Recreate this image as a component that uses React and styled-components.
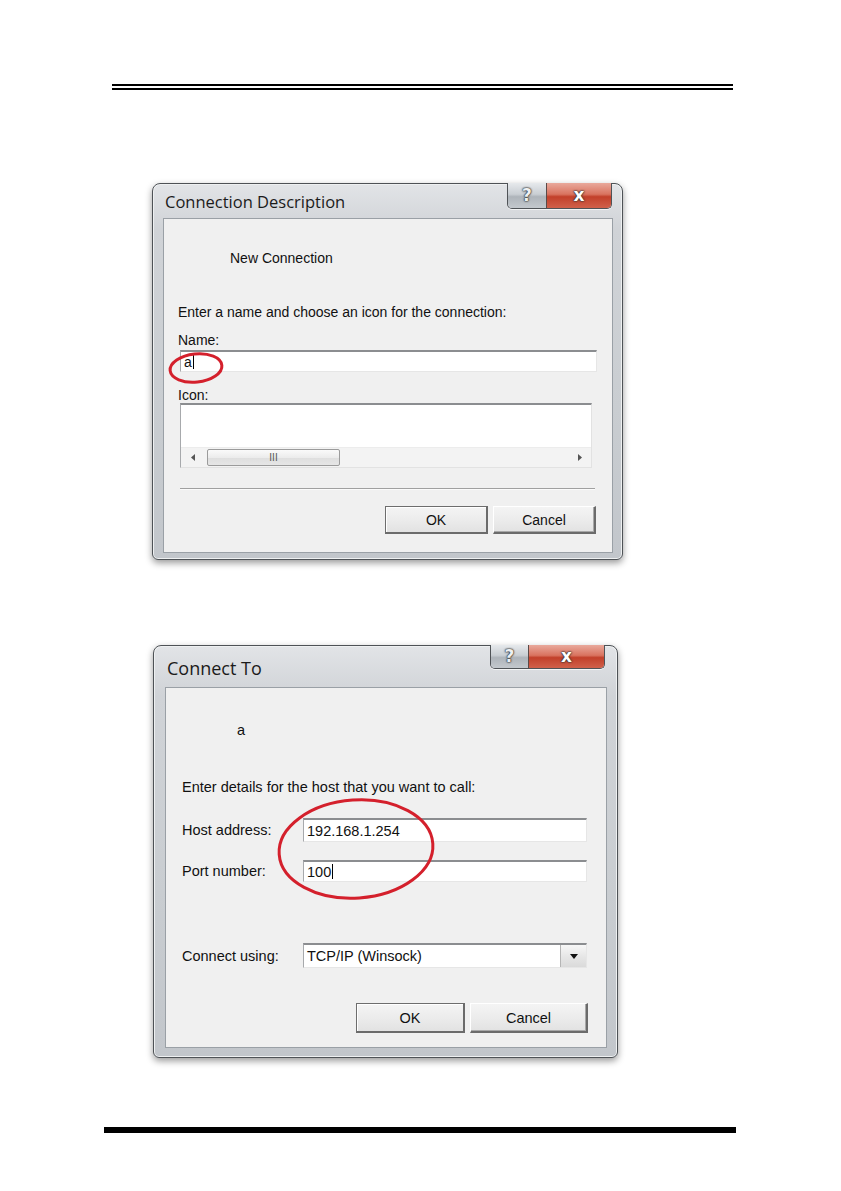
import React from "react";
import styled, { createGlobalStyle } from "styled-components";

const GlobalStyle = createGlobalStyle`
  html, body {
    margin: 0;
    padding: 0;
    background: #ffffff;
  }
  body {
    font-family: "Liberation Sans", Arial, sans-serif;
    color: #000;
  }
`;

const Page = styled.div`
  width: 841px;
  min-height: 1191px;
  padding-top: 84px;
  box-sizing: border-box;
  display: flex;
  flex-direction: column;
`;

const HeaderRule = styled.div`
  margin-left: 112px;
  width: 621px;
  height: 2px;
  border-top: 2px solid #000;
  border-bottom: 2px solid #000;
`;

const FooterRule = styled.div`
  margin-top: 69px;
  margin-left: 104px;
  width: 632px;
  height: 6px;
  background: #000;
`;

const Window = styled.div`
  position: relative;
  box-sizing: border-box;
  margin-top: ${(p) => p.$top}px;
  margin-left: ${(p) => p.$left}px;
  width: ${(p) => p.$width}px;
  height: ${(p) => p.$height}px;
  padding: 0 ${(p) => p.$padR}px ${(p) => p.$padB}px ${(p) => p.$padL}px;
  border: 1px solid #4e5256;
  border-radius: 8px 8px 6px 6px;
  background: linear-gradient(180deg, #e2e4e7 0%, #d0d3d7 12%, #c9cdd1 60%, #c2c6cb 100%);
  box-shadow: inset 0 0 0 1px #eef0f1, 0 3px 7px rgba(0, 0, 0, 0.4);
  display: flex;
  flex-direction: column;
`;

const TitleBar = styled.div`
  height: ${(p) => p.$height}px;
  display: flex;
  justify-content: space-between;
  align-items: flex-start;
  flex-shrink: 0;
`;

const Title = styled.div`
  padding-top: ${(p) => p.$pt}px;
  padding-left: 2px;
  font-family: "Open Sans", "Noto Sans", sans-serif;
  font-size: ${(p) => p.$size}px;
  line-height: 20px;
  color: #1b1b1b;
  white-space: nowrap;
`;

const Caption = styled.div`
  display: flex;
  margin-top: -1px;
  margin-right: ${(p) => p.$right}px;
  height: ${(p) => p.$height}px;
  border: 1px solid #4f5357;
  border-top: none;
  border-radius: 0 0 5px 5px;
  overflow: hidden;
  box-shadow: 0 1px 0 rgba(255, 255, 255, 0.7);
`;

const CapButton = styled.div`
  width: ${(p) => p.$w}px;
  display: flex;
  align-items: center;
  justify-content: center;
  font-family: "DejaVu Sans", sans-serif;
  font-weight: bold;
  font-size: ${(p) => (p.$close ? 17 : 17)}px;
  line-height: 1;
  color: ${(p) => (p.$close ? "#ffffff" : "#eef0f2")};
  text-shadow: 0 0 1px #2e2e2e, 0 0 2px #2e2e2e, 0 0 2px #444;
  background: ${(p) =>
    p.$close
      ? "linear-gradient(180deg, #e9a99c 0%, #d9735f 45%, #c2402a 55%, #d0604a 100%)"
      : "linear-gradient(180deg, #e6e9ec 0%, #c9ced3 45%, #aeb4ba 55%, #c3c8cd 100%)"};
  border-left: ${(p) => (p.$close ? "1px solid #5a4a48" : "none")};
`;

const Panel = styled.div`
  position: relative;
  box-sizing: border-box;
  height: ${(p) => p.$height}px;
  padding: ${(p) => p.$pad};
  background: #f0f0f0;
  border: 1px solid #9aa0a6;
  display: flex;
  flex-direction: column;
  font-size: ${(p) => p.$font}px;
  color: #111;
`;

const Text = styled.div`
  height: 16px;
  line-height: 16px;
  margin-top: ${(p) => p.$mt || 0}px;
  margin-left: ${(p) => p.$ml || 0}px;
  white-space: nowrap;
`;

const Field = styled.div`
  box-sizing: border-box;
  margin-top: ${(p) => p.$mt || 0}px;
  margin-left: ${(p) => p.$ml || 0}px;
  width: ${(p) => p.$w}px;
  height: ${(p) => p.$h}px;
  background: #fff;
  border-top: 2px solid #8b8d90;
  border-left: 1px solid #a7a9ac;
  border-right: 1px solid #e6e6e6;
  border-bottom: 1px solid #e6e6e6;
  padding-left: 3px;
  display: flex;
  align-items: center;
  white-space: nowrap;
`;

const Caret = styled.span`
  display: inline-block;
  width: 1px;
  height: 15px;
  margin-left: 1px;
  background: #000;
`;

const ListBox = styled.div`
  box-sizing: border-box;
  margin-left: 2px;
  width: 412px;
  height: 65px;
  background: #fff;
  border-top: 2px solid #8b8d90;
  border-left: 1px solid #a7a9ac;
  border-right: 1px solid #e2e2e2;
  border-bottom: 1px solid #e2e2e2;
  display: flex;
  flex-direction: column;
  justify-content: flex-end;
`;

const ScrollBar = styled.div`
  height: 19px;
  background: #f3f3f3;
  border-top: 1px solid #ececec;
  display: flex;
  align-items: center;
`;

const ScrollArrow = styled.div`
  width: 24px;
  display: flex;
  justify-content: center;
  align-items: center;
`;

const Thumb = styled.div`
  box-sizing: border-box;
  width: 133px;
  height: 17px;
  margin-left: 2px;
  border: 1px solid #9b9b9b;
  border-radius: 2px;
  background: linear-gradient(180deg, #fafafa 0%, #ececec 50%, #dedede 51%, #e6e6e6 100%);
  display: flex;
  justify-content: center;
  align-items: center;
  font-size: 10px;
  color: #555;
`;

const Spacer = styled.div`
  flex: 1;
`;

const Separator = styled.div`
  margin-top: 20px;
  margin-left: 2px;
  width: 415px;
  height: 1px;
  background: #a0a0a0;
  border-bottom: 1px solid #fbfbfb;
`;

const ButtonRow = styled.div`
  margin-top: ${(p) => p.$mt}px;
  display: flex;
  justify-content: flex-end;
  gap: 5px;
`;

const Button = styled.div`
  box-sizing: border-box;
  width: ${(p) => p.$w}px;
  height: ${(p) => p.$h}px;
  display: flex;
  align-items: center;
  justify-content: center;
  background: linear-gradient(180deg, #f4f4f4 0%, #ececec 50%, #e2e2e2 100%);
  border-top: 1px solid ${(p) => (p.$default ? "#6d6d6d" : "#ffffff")};
  border-left: 1px solid ${(p) => (p.$default ? "#6d6d6d" : "#ffffff")};
  border-right: 2px solid #6b6b6b;
  border-bottom: 2px solid #6b6b6b;
  box-shadow: ${(p) => (p.$default ? "inset 1px 1px 0 #fff" : "inset -1px -1px 0 #a8a8a8")};
  color: #111;
`;

const FormRow = styled.div`
  margin-top: ${(p) => p.$mt}px;
  display: flex;
  align-items: center;
`;

const RowLabel = styled.div`
  width: 121px;
  flex-shrink: 0;
  white-space: nowrap;
`;

const Combo = styled(Field)`
  padding-right: 0;
  justify-content: space-between;
`;

const DropButton = styled.div`
  box-sizing: border-box;
  width: 26px;
  height: 100%;
  border-left: 1px solid #b5b5b5;
  background: linear-gradient(180deg, #f7f7f7 0%, #e7e7e7 50%, #dadada 100%);
  display: flex;
  align-items: center;
  justify-content: center;
`;

const Ring = styled.svg`
  position: absolute;
  left: ${(p) => p.$x}px;
  top: ${(p) => p.$y}px;
  overflow: visible;
  pointer-events: none;
`;

const Arrow = ({ dir }) => (
  <svg width="5" height="7" viewBox="0 0 5 7">
    {dir === "left" ? <path d="M4 0 L0 3.5 L4 7 Z" fill="#555" /> : <path d="M1 0 L5 3.5 L1 7 Z" fill="#555" />}
  </svg>
);

const ConnectionDescription = () => (
  <Window $top={93} $left={152} $width={471} $height={377} $padL={10} $padR={9} $padB={6}>
    <TitleBar $height={34}>
      <Title $pt={8} $size={16.5}>Connection Description</Title>
      <Caption $right={1} $height={25}>
        <CapButton $w={38}>?</CapButton>
        <CapButton $w={64} $close>x</CapButton>
      </Caption>
    </TitleBar>
    <Panel $height={335} $pad="31px 16px 18px 14px" $font={14}>
      <Text $ml={52}>New Connection</Text>
      <Text $mt={38}>Enter a name and choose an icon for the connection:</Text>
      <Text $mt={12}>Name:</Text>
      <Field $mt={2} $ml={2} $w={417} $h={22}>
        a<Caret />
      </Field>
      <Text $mt={15}>Icon:</Text>
      <ListBox>
        <ScrollBar>
          <ScrollArrow>
            <Arrow dir="left" />
          </ScrollArrow>
          <Thumb>III</Thumb>
          <Spacer />
          <ScrollArrow>
            <Arrow dir="right" />
          </ScrollArrow>
        </ScrollBar>
      </ListBox>
      <Separator />
      <ButtonRow $mt={16}>
        <Button $w={103} $h={28} $default>OK</Button>
        <Button $w={103} $h={28}>Cancel</Button>
      </ButtonRow>
      <Ring $x={3} $y={132} width="58" height="34" viewBox="0 0 58 34">
        <ellipse cx="29" cy="17" rx="26" ry="14" fill="none" stroke="#d4202c" strokeWidth="3" transform="rotate(-6 29 17)" />
      </Ring>
    </Panel>
  </Window>
);

const ConnectTo = () => (
  <Window $top={85} $left={153} $width={465} $height={413} $padL={11} $padR={10} $padB={9}>
    <TitleBar $height={41}>
      <Title $pt={12} $size={18}>Connect To</Title>
      <Caption $right={2} $height={23}>
        <CapButton $w={37}>?</CapButton>
        <CapButton $w={75} $close>x</CapButton>
      </Caption>
    </TitleBar>
    <Panel $height={361} $pad="34px 18px 14px 16px" $font={14.5}>
      <Text $ml={55}>a</Text>
      <Text $mt={41}>Enter details for the host that you want to call:</Text>
      <FormRow $mt={23}>
        <RowLabel>Host address:</RowLabel>
        <Field $w={284} $h={24}>192.168.1.254</Field>
      </FormRow>
      <FormRow $mt={18}>
        <RowLabel>Port number:</RowLabel>
        <Field $w={284} $h={22}>
          100<Caret />
        </Field>
      </FormRow>
      <FormRow $mt={61}>
        <RowLabel>Connect using:</RowLabel>
        <Combo $w={284} $h={25}>
          TCP/IP (Winsock)
          <DropButton>
            <svg width="8" height="5" viewBox="0 0 8 5">
              <path d="M0 0 H8 L4 5 Z" fill="#111" />
            </svg>
          </DropButton>
        </Combo>
      </FormRow>
      <ButtonRow $mt={35}>
        <Button $w={109} $h={30} $default>OK</Button>
        <Button $w={118} $h={30}>Cancel</Button>
      </ButtonRow>
      <Ring $x={110} $y={109} width="160" height="104" viewBox="0 0 160 104">
        <ellipse cx="80" cy="52" rx="77" ry="49" fill="none" stroke="#d4202c" strokeWidth="3" transform="rotate(-4 80 52)" />
      </Ring>
    </Panel>
  </Window>
);

const App = () => (
  <>
    <GlobalStyle />
    <Page>
      <HeaderRule />
      <ConnectionDescription />
      <ConnectTo />
      <FooterRule />
    </Page>
  </>
);

export default App;
